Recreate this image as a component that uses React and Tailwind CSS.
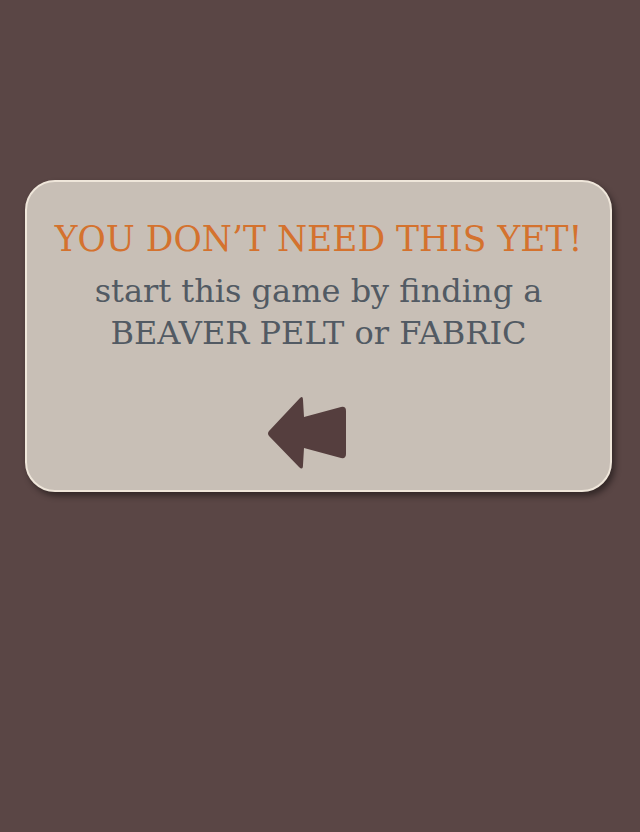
import React from 'react';

const Arrow = () => (
  <svg width="90" height="84" viewBox="0 0 90 84" className="blur-[0.6px]">
    <path
      d="M6 39 L37 6 Q40 3 40 8 L41 25 L78 15 Q83 14 83 19 L83 62 Q83 67 78 66 L41 56 L40 73 Q40 79 36 75 L6 44 Q4 41.5 6 39 Z"
      fill="#553e3e"
    />
  </svg>
);

export default function App() {
  return (
    <div className="min-h-[832px] w-full bg-[#5a4645] pt-[180px] pl-[25px] pr-[28px]">
      <div className="flex h-[312px] w-[587px] flex-col items-center rounded-[30px] border-2 border-[#efe6da] bg-[#c8bfb6] shadow-[3px_4px_6px_rgba(0,0,0,0.45)]">
        <h1 className="mt-[35px] text-[34.5px] leading-[44px] text-[#d4722e] font-['DejaVu_Serif',serif]">
          YOU DON’T NEED THIS YET!
        </h1>
        <p className="mt-[9px] text-center text-[32px] leading-[42px] text-[#525a63] font-['DejaVu_Serif',serif]">
          start this game by finding a
          <br />
          BEAVER PELT or FABRIC
        </p>
        <div className="mt-[38px] mr-[22px]">
          <Arrow />
        </div>
      </div>
    </div>
  );
}
